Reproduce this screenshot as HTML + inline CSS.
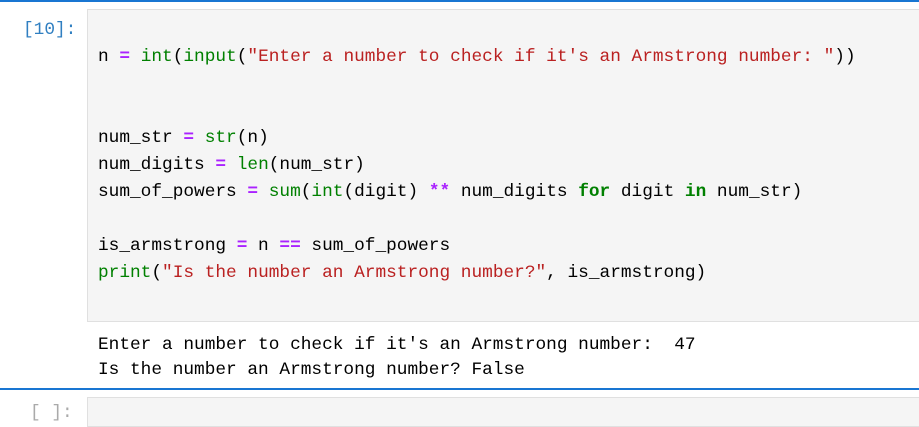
<!DOCTYPE html>
<html><head><style>
body{margin:0;width:919px;height:411px;background:#fff;position:relative;overflow:hidden;font-family:"Liberation Mono","DejaVu Sans Mono",monospace;}
.top{position:absolute;left:0;top:0;width:919px;height:2px;background:#1976d2;}
.sep{position:absolute;left:0;top:388px;width:919px;height:2px;background:#1976d2;}
.prompt{position:absolute;left:23px;top:17px;color:#307fc1;font-size:17.8px;line-height:27px;}
.box{position:absolute;left:87px;top:9px;width:840px;height:313px;background:#f5f5f5;border:1px solid #e0e0e0;box-sizing:border-box;}
.code{position:absolute;left:98px;top:17px;font-size:17.8px;line-height:27px;white-space:pre;color:#000;}
.out{position:absolute;left:98px;top:333px;font-size:17.8px;line-height:25px;white-space:pre;color:#000;}
.box2{position:absolute;left:87px;top:397px;width:840px;height:30px;background:#f5f5f5;border:1px solid #e0e0e0;box-sizing:border-box;}
.p2{position:absolute;left:30px;top:403px;color:#aaa;font-size:17.8px;}
.g{color:#008000}.o{color:#aa22ff;font-weight:bold}.s{color:#ba2121}.k{color:#008000;font-weight:bold}
</style></head><body>
<div class="top"></div>
<div class="prompt">[10]:</div>
<div class="box"></div>
<div class="code">
n <span class="o">=</span> <span class="g">int</span>(<span class="g">input</span>(<span class="s">"Enter a number to check if it's an Armstrong number: "</span>))


num_str <span class="o">=</span> <span class="g">str</span>(n)
num_digits <span class="o">=</span> <span class="g">len</span>(num_str)
sum_of_powers <span class="o">=</span> <span class="g">sum</span>(<span class="g">int</span>(digit) <span class="o">**</span> num_digits <span class="k">for</span> digit <span class="k">in</span> num_str)

is_armstrong <span class="o">=</span> n <span class="o">==</span> sum_of_powers
<span class="g">print</span>(<span class="s">"Is the number an Armstrong number?"</span>, is_armstrong)
</div>
<div class="out">Enter a number to check if it's an Armstrong number:  47
Is the number an Armstrong number? False</div>
<div class="sep"></div>
<div class="p2">[ ]:</div>
<div class="box2"></div>
</body></html>
